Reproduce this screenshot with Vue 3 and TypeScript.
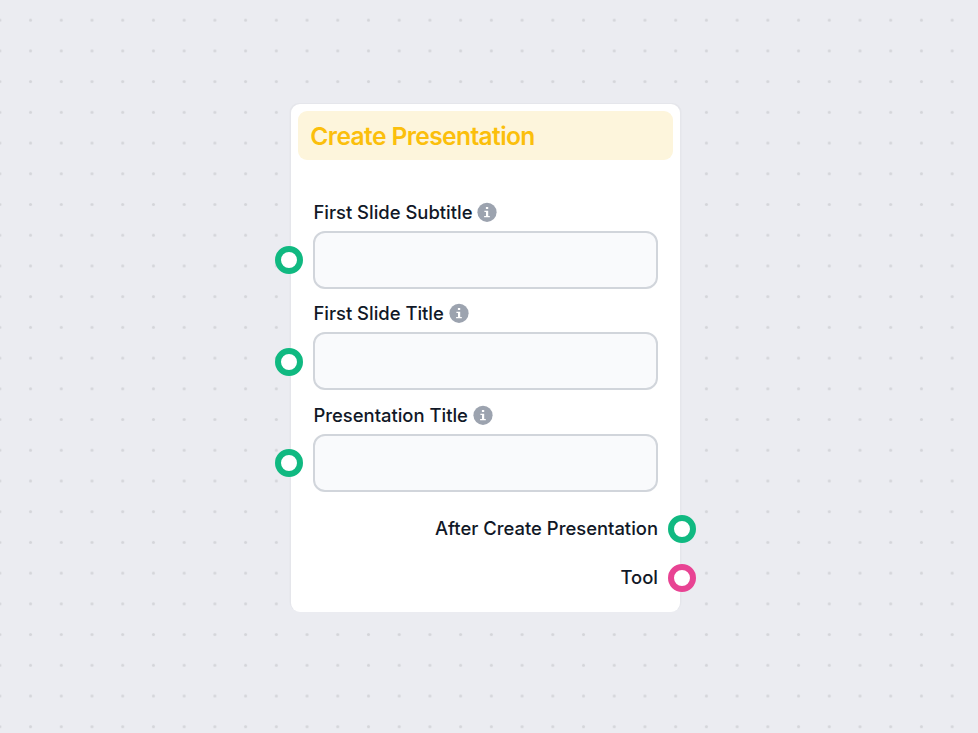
<script setup lang="ts">
interface Field {
  id: string
  label: string
}

interface Output {
  id: string
  label: string
  color: 'green' | 'pink'
}

const title = 'Create Presentation'

const fields: Field[] = [
  { id: 'first-subtitle', label: 'First Slide Subtitle' },
  { id: 'first-title', label: 'First Slide Title' },
  { id: 'presentation-title', label: 'Presentation Title' },
]

const outputs: Output[] = [
  { id: 'after', label: 'After Create Presentation', color: 'green' },
  { id: 'tool', label: 'Tool', color: 'pink' },
]
</script>

<template>
  <main class="canvas">
    <svg class="dots" width="100%" height="100%" aria-hidden="true">
      <pattern id="grid" x="15.2" y="4.8" width="30.72" height="30.72" patternUnits="userSpaceOnUse">
        <circle cx="15.36" cy="15.36" r="1.54" fill="#d4d5da" />
      </pattern>
      <rect width="100%" height="100%" fill="url(#grid)" />
    </svg>

    <section class="node">
      <h1 class="title">{{ title }}</h1>

      <div class="fields">
        <div v-for="field in fields" :key="field.id" class="field">
          <div class="label-row">
            <label :for="field.id">{{ field.label }}</label>
            <svg class="info" viewBox="0 0 20 20" aria-hidden="true">
              <circle cx="10" cy="10.3" r="9.6" fill="#9ca3af" />
              <path d="M8.9 4.9h2.3v2.2H8.9zM7.4 8.7h3.8v5.2h1.6v1.4H7.1v-1.4h1.9v-3.8H7.4z" fill="#fff" />
            </svg>
          </div>
          <div class="control">
            <input :id="field.id" type="text" />
            <span class="handle left green"></span>
          </div>
        </div>
      </div>

      <div class="outputs">
        <div v-for="output in outputs" :key="output.id" class="output">
          <span>{{ output.label }}</span>
          <span class="handle right" :class="output.color"></span>
        </div>
      </div>
    </section>
  </main>
</template>

<style>
body {
  margin: 0;
}
</style>

<style scoped>
.canvas {
  position: relative;
  box-sizing: border-box;
  height: 100vh;
  padding: 104px 298px 0 291px;
  overflow: hidden;
  background: #ebecf1;
  color: #111827;
  font-family: Inter, sans-serif;
}

.dots {
  position: absolute;
  inset: 0;
}

.node {
  position: relative;
  box-sizing: border-box;
  height: 508px;
  padding: 7px;
  border-radius: 9px;
  background: #fff;
  box-shadow: -1.5px -1px 0 #e5e6eb, 1.5px -1px 0 #e5e6eb;
}

.title {
  box-sizing: border-box;
  height: 49px;
  margin: 0;
  padding: 0 12.3px;
  border-radius: 9px;
  background: #fdf5dc;
  color: #fbbf0c;
  font-size: 24.58px;
  font-weight: 600;
  line-height: 50px;
  letter-spacing: -0.61px;
}

.fields {
  display: flex;
  flex-direction: column;
  gap: 10.4px;
  padding: 38px 15px 0;
}

.label-row {
  display: flex;
  align-items: center;
  gap: 4.7px;
  height: 28px;
  padding-left: 0.4px;
  margin-bottom: 5px;
}

label,
.output {
  font-size: 18.43px;
  font-weight: 500;
  line-height: 28px;
}

.info {
  width: 20px;
  height: 20px;
  overflow: visible;
}

.control {
  position: relative;
}

input {
  display: block;
  box-sizing: border-box;
  width: 100%;
  height: 58px;
  border: 2px solid #d1d5db;
  border-radius: 12px;
  background: #f9fafc;
}

.outputs {
  display: flex;
  flex-direction: column;
  gap: 21px;
  padding: 22.4px 15px 0;
}

.output {
  position: relative;
  text-align: right;
}

.handle {
  position: absolute;
  top: 50%;
  box-sizing: border-box;
  width: 28px;
  height: 28px;
  margin-top: -13.8px;
  border: 6px solid;
  border-radius: 50%;
  background: #fff;
}

.right {
  right: -38px;
  margin-top: -13.4px;
}

.left {
  left: -38px;
}

.green {
  border-color: #10b981;
}

.pink {
  border-color: #e84393;
}
</style>
